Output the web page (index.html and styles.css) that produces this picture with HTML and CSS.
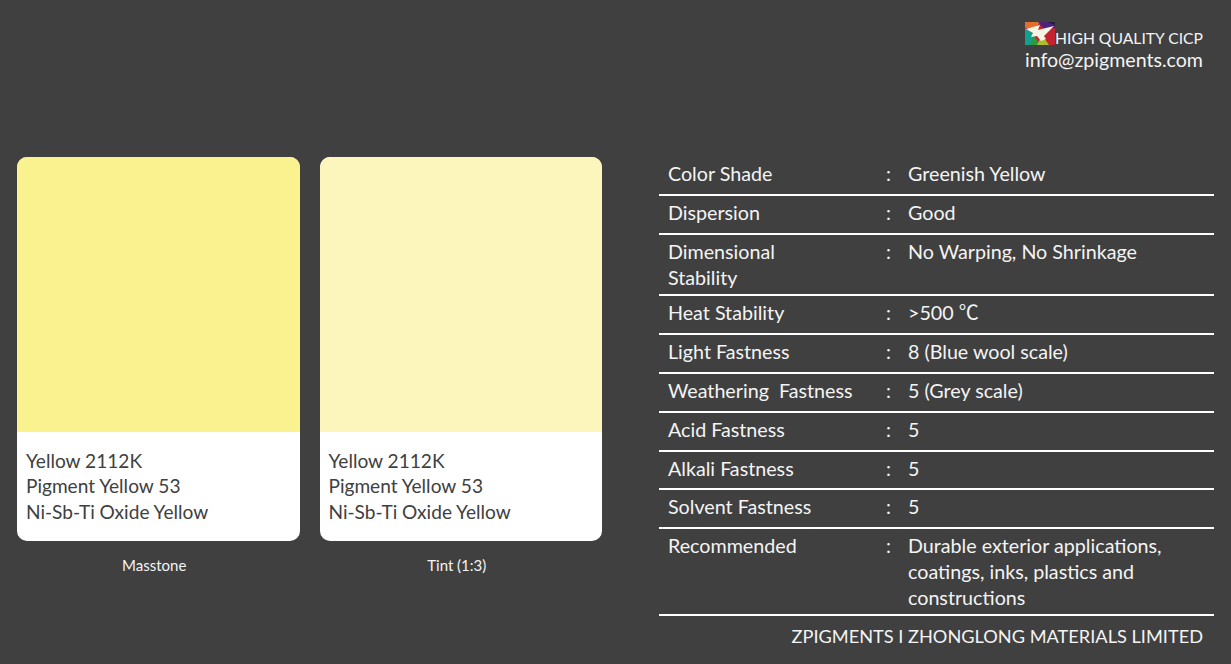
FILE: index.html
```html
<!DOCTYPE html>
<html lang="en">
<head>
<meta charset="utf-8">
<title>Yellow 2112K</title>
<link rel="stylesheet" href="styles.css">
</head>
<body>
<header class="brand">
  <div class="brand-line">
    <svg class="logo" viewBox="0 0 30 23" width="30" height="23" aria-hidden="true">
      <rect width="30" height="23" fill="#c4242e"/>
      <polygon points="0,0 16,0 10,6 0,6" fill="#e2702c"/>
      <polygon points="13,0 30,0 30,6 20,8" fill="#4c2378"/>
      <polygon points="22,0 30,0 30,3" fill="#2a1c40"/>
      <polygon points="0,6 9,12 6,23 0,23" fill="#14a08e"/>
      <polygon points="5,23 9,13 15,23" fill="#2e9a3e"/>
      <polygon points="12,23 17,13 24,23" fill="#a9bf2e"/>
      <polygon points="1,7 15,3 13,8 29,4 19,14 21,17 16,19 12,14 6,15 8,11" fill="#f5f5e6"/>
    </svg>
    <span class="brand-title">HIGH QUALITY CICP</span>
  </div>
  <div class="brand-mail">info@zpigments.com</div>
</header>
<main class="content">
  <section class="swatches">
    <figure class="swatch">
      <div class="card">
        <div class="color color-mass"></div>
        <div class="label">Yellow 2112K<br>Pigment Yellow 53<br>Ni-Sb-Ti Oxide Yellow</div>
      </div>
      <figcaption>Masstone</figcaption>
    </figure>
    <figure class="swatch">
      <div class="card">
        <div class="color color-tint"></div>
        <div class="label">Yellow 2112K<br>Pigment Yellow 53<br>Ni-Sb-Ti Oxide Yellow</div>
      </div>
      <figcaption>Tint (1:3)</figcaption>
    </figure>
  </section>
  <section class="specs">
    <div class="row"><div>Color Shade</div><div class="sep">:</div><div>Greenish Yellow</div></div>
    <div class="row"><div>Dispersion</div><div class="sep">:</div><div>Good</div></div>
    <div class="row row-multi"><div>Dimensional<br>Stability</div><div class="sep">:</div><div>No Warping, No Shrinkage</div></div>
    <div class="row"><div>Heat Stability</div><div class="sep">:</div><div>&gt;500 <span class="deg">℃</span></div></div>
    <div class="row"><div>Light Fastness</div><div class="sep">:</div><div>8 (Blue wool scale)</div></div>
    <div class="row"><div>Weathering&nbsp; Fastness</div><div class="sep">:</div><div>5 (Grey scale)</div></div>
    <div class="row"><div>Acid Fastness</div><div class="sep">:</div><div>5</div></div>
    <div class="row row-tight"><div>Alkali Fastness</div><div class="sep">:</div><div>5</div></div>
    <div class="row"><div>Solvent Fastness</div><div class="sep">:</div><div>5</div></div>
    <div class="row row-multi"><div>Recommended</div><div class="sep">:</div><div>Durable exterior applications,<br>coatings, inks, plastics and<br>constructions</div></div>
    <div class="company">ZPIGMENTS I ZHONGLONG MATERIALS LIMITED</div>
  </section>
</main>
</body>
</html>
```

FILE: styles.css
```css
* { box-sizing: border-box; }
html, body { margin: 0; height: 100%; }
body {
  background: #404040;
  color: #f4f4f4;
  font-family: Lato, "Open Sans", sans-serif;
  overflow: hidden;
  width: 1231px;
  height: 664px;
}
.brand {
  height: 157px;
  padding: 22px 28px 0 0;
  display: flex;
  flex-direction: column;
  align-items: flex-end;
}
.brand-line {
  display: flex;
  align-items: flex-start;
  font-size: 15.7px;
  line-height: 22px;
  height: 26px;
}
.brand-title { margin-top: 5px; }
.logo { display: block; filter: blur(0.4px); }
.brand-mail { font-size: 19.6px; line-height: 24px; }
.content { display: flex; }
.swatches { display: flex; gap: 20px; margin-left: 17px; width: 642px; }
.swatch { margin: 0; width: 282.5px; }
.card {
  height: 384px;
  border-radius: 10px;
  overflow: hidden;
  background: #fff;
  display: flex;
  flex-direction: column;
}
.color { height: 275px; }
.color-mass { background: #faf18f; }
.color-tint { background: #fcf6bd; }
.label {
  color: #404040;
  padding: 16px 0 0 9px;
  font-size: 19.1px;
  line-height: 25.4px;
}
figcaption {
  font-size: 15px;
  line-height: 18px;
  text-align: center;
  padding: 15px 8px 0 0;
}
.specs { width: 555px; }
.row {
  display: grid;
  grid-template-columns: 218px 22px 1fr;
  padding: 4px 0 7px 9px;
  font-size: 19.7px;
  line-height: 26px;
  border-bottom: 2px solid #fff;
}
.row-multi { padding-bottom: 3px; }
.row-tight { padding-bottom: 6px; }
.deg { font-family: "Noto Sans CJK SC", sans-serif; font-size: 20px; line-height: 1; }
.company {
  font-size: 18.2px;
  line-height: 24px;
  text-align: right;
  padding: 8px 11px 0 0;
}
```
